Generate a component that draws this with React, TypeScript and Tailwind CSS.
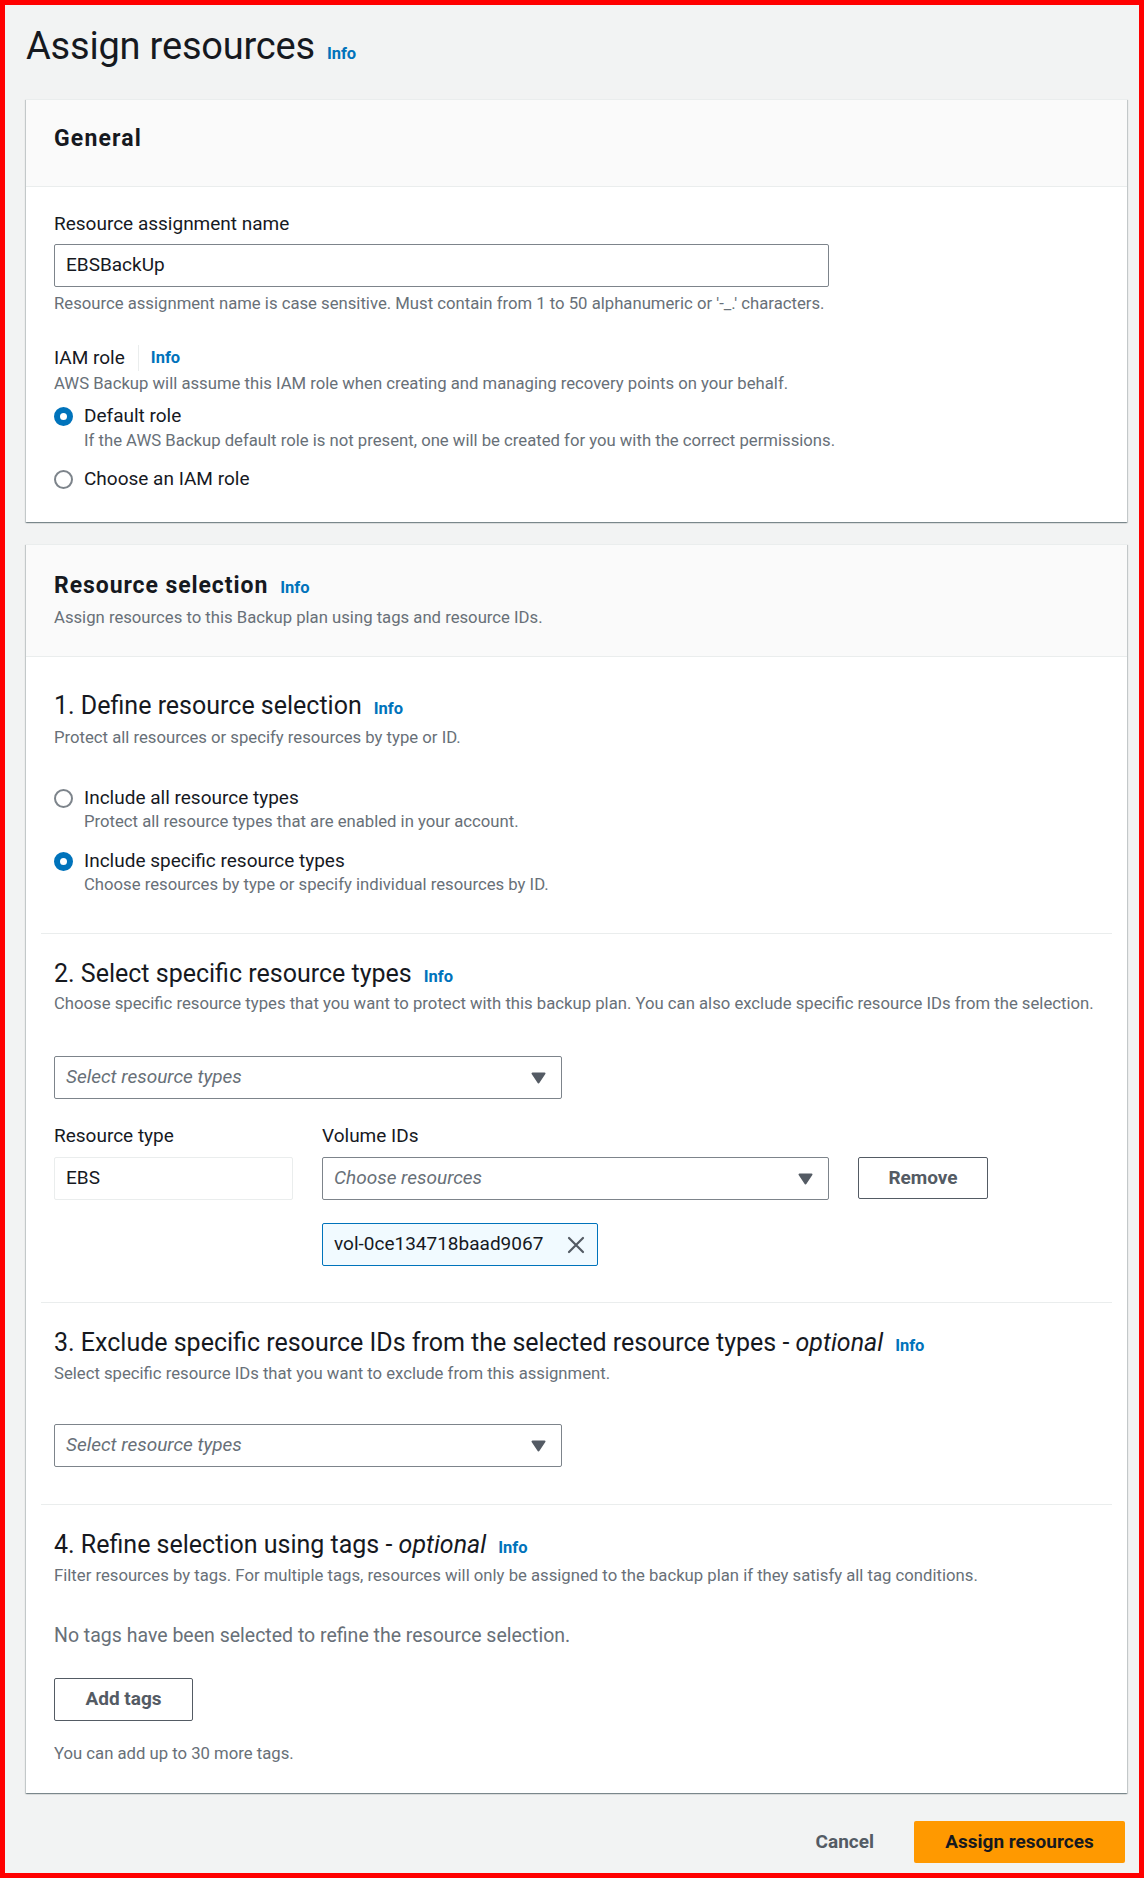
import React from "react";

const Info = () => (
  <span className="text-[16.5px] font-bold text-[#0073bb] ml-[12px]">Info</span>
);

const Caret = () => (
  <svg width="15" height="12" viewBox="0 0 15 12" className="shrink-0">
    <path d="M1.5 1.5 L13.5 1.5 L7.5 10.5 Z" fill="#545b64" stroke="#545b64" strokeWidth="2" strokeLinejoin="round" />
  </svg>
);

const XIcon = () => (
  <svg width="18" height="18" viewBox="0 0 18 18" className="shrink-0">
    <path d="M2 2 L16 16 M16 2 L2 16" stroke="#545b64" strokeWidth="2.2" strokeLinecap="round" fill="none" />
  </svg>
);

const Radio = ({ checked }: { checked: boolean }) =>
  checked ? (
    <span className="w-[19px] h-[19px] rounded-full border-[6px] border-[#0073bb] bg-white shrink-0 box-border" />
  ) : (
    <span className="w-[19px] h-[19px] rounded-full border-[2px] border-[#7d848b] bg-white shrink-0 box-border" />
  );

const RadioRow = ({ checked, label }: { checked: boolean; label: string }) => (
  <div className="flex items-center h-[24px]">
    <div className="w-[30px] flex items-center">
      <Radio checked={checked} />
    </div>
    <span className="text-[19px] leading-[24px]">{label}</span>
  </div>
);

const Select = ({ placeholder, width }: { placeholder: string; width: string }) => (
  <div
    className={`${width} h-[43px] border border-[#7d848b] rounded-[2px] bg-white flex items-center justify-between pl-[11px] pr-[15px]`}
  >
    <span className="text-[19px] italic text-[#687078]">{placeholder}</span>
    <Caret />
  </div>
);

const Help = ({ children, className = "" }: { children: React.ReactNode; className?: string }) => (
  <div className={`text-[16.7px] leading-[20px] text-[#687078] ${className}`}>{children}</div>
);

const H3 = ({ children }: { children: React.ReactNode }) => (
  <div className="flex items-baseline h-[30px]">
    <h3 className="text-[25px] leading-[30px] font-normal">{children}</h3>
    <Info />
  </div>
);

const cardShadow =
  "bg-white border-t border-[#eaeded] shadow-[0_1px_1px_0_rgba(0,28,36,0.3),1px_1px_1px_0_rgba(0,28,36,0.15),-1px_1px_1px_0_rgba(0,28,36,0.15)]";

export default function App() {
  return (
    <div className="w-[1144px] h-[1878px] border-[5px] border-[#ff0000] bg-[#f2f3f3] pl-[21px] pr-[12px] font-[Roboto,sans-serif] text-[#16191f] overflow-hidden">
      {/* Title */}
      <div className="pt-[18px] flex items-baseline h-[64px]">
        <h1 className="text-[38px] leading-[46px] font-normal tracking-[-0.2px]">Assign resources</h1>
        <Info />
      </div>

      {/* General card */}
      <div className={`mt-[30px] ${cardShadow}`}>
        <div className="bg-[#fafafa] border-b border-[#eaeded] pl-[28px] pt-[25px] pb-[33px]">
          <h2 className="text-[23px] leading-[28px] font-bold tracking-[0.05em]">General</h2>
        </div>
        <div className="px-[28px] pt-[25px] pb-[31px]">
          <div className="text-[19px] leading-[24px]">Resource assignment name</div>
          <div className="mt-[8px] w-[775px] h-[43px] border border-[#7d848b] rounded-[2px] flex items-center px-[11px] text-[19px]">
            EBSBackUp
          </div>
          <Help className="mt-[7px]">
            Resource assignment name is case sensitive. Must contain from 1 to 50 alphanumeric or '-_.' characters.
          </Help>
          <div className="mt-[32px] flex items-center h-[24px]">
            <span className="text-[19px] leading-[24px]">IAM role</span>
            <span className="ml-[13px] h-[26px] border-l border-[#eaeded]" />
            <span className="text-[16.5px] font-bold text-[#0073bb] ml-[12px]">Info</span>
          </div>
          <Help className="mt-[4px]">
            AWS Backup will assume this IAM role when creating and managing recovery points on your behalf.
          </Help>
          <div className="mt-[10px]">
            <RadioRow checked label="Default role" />
            <Help className="mt-[3px] pl-[30px]">
              If the AWS Backup default role is not present, one will be created for you with the correct permissions.
            </Help>
          </div>
          <div className="mt-[16px]">
            <RadioRow checked={false} label="Choose an IAM role" />
          </div>
        </div>
      </div>

      {/* Resource selection card */}
      <div className={`mt-[22px] ${cardShadow}`}>
        <div className="bg-[#fafafa] border-b border-[#eaeded] pl-[28px] pt-[27px] pb-[28px]">
          <div className="flex items-baseline h-[28px]">
            <h2 className="text-[23px] leading-[28px] font-bold tracking-[0.04em]">Resource selection</h2>
            <Info />
          </div>
          <Help className="mt-[8px]">Assign resources to this Backup plan using tags and resource IDs.</Help>
        </div>

        <div className="mx-[15px]">
          {/* Section 1 */}
          <div className="px-[13px] pt-[34px] pb-[38px] border-b border-[#eaeded]">
            <H3>1. Define resource selection</H3>
            <Help className="mt-[7px]">Protect all resources or specify resources by type or ID.</Help>
            <div className="mt-[38px]">
              <RadioRow checked={false} label="Include all resource types" />
              <Help className="mt-[2px] pl-[30px]">Protect all resource types that are enabled in your account.</Help>
            </div>
            <div className="mt-[17px]">
              <RadioRow checked label="Include specific resource types" />
              <Help className="mt-[2px] pl-[30px]">Choose resources by type or specify individual resources by ID.</Help>
            </div>
          </div>

          {/* Section 2 */}
          <div className="px-[13px] pt-[25px] pb-[36px] border-b border-[#eaeded]">
            <H3>2. Select specific resource types</H3>
            <Help className="mt-[5px]">
              Choose specific resource types that you want to protect with this backup plan. You can also exclude specific resource IDs from the selection.
            </Help>
            <div className="mt-[42px]">
              <Select placeholder="Select resource types" width="w-[508px]" />
            </div>
            <div className="mt-[25px] grid grid-cols-[239px_507px_130px] gap-x-[29px]">
              <div className="text-[19px] leading-[24px]">Resource type</div>
              <div className="text-[19px] leading-[24px]">Volume IDs</div>
              <div />
            </div>
            <div className="mt-[9px] grid grid-cols-[239px_507px_130px] gap-x-[29px]">
              <div className="h-[43px] border border-[#eaeded] rounded-[2px] bg-white flex items-center px-[11px] text-[19px]">
                EBS
              </div>
              <Select placeholder="Choose resources" width="w-[507px]" />
              <button className="h-[42px] border border-[#545b64] rounded-[2px] bg-white text-[19px] font-bold text-[#545b64]">
                Remove
              </button>
            </div>
            <div className="mt-[23px] ml-[268px] w-[276px] h-[43px] border border-[#0073bb] rounded-[2px] bg-[#f1faff] flex items-center justify-between pl-[11px] pr-[12px]">
              <span className="text-[19px]">vol-0ce134718baad9067</span>
              <XIcon />
            </div>
          </div>

          {/* Section 3 */}
          <div className="px-[13px] pt-[25px] pb-[37px] border-b border-[#eaeded]">
            <H3>
              3. Exclude specific resource IDs from the selected resource types - <i>optional</i>
            </H3>
            <Help className="mt-[6px]">Select specific resource IDs that you want to exclude from this assignment.</Help>
            <div className="mt-[40px]">
              <Select placeholder="Select resource types" width="w-[508px]" />
            </div>
          </div>

          {/* Section 4 */}
          <div className="px-[13px] pt-[25px] pb-[29px]">
            <H3>
              4. Refine selection using tags - <i>optional</i>
            </H3>
            <Help className="mt-[6px]">
              Filter resources by tags. For multiple tags, resources will only be assigned to the backup plan if they satisfy all tag conditions.
            </Help>
            <div className="mt-[38px] text-[19.5px] leading-[24px] text-[#687078]">
              No tags have been selected to refine the resource selection.
            </div>
            <button className="mt-[30px] w-[139px] h-[43px] border border-[#545b64] rounded-[2px] bg-white text-[19px] font-bold text-[#545b64]">
              Add tags
            </button>
            <Help className="mt-[23px]">You can add up to 30 more tags.</Help>
          </div>
        </div>
      </div>

      {/* Footer */}
      <div className="mt-[28px] flex justify-end items-center gap-[20px] pr-[2px]">
        <button className="h-[42px] px-[20px] text-[19px] font-bold text-[#545b64]">Cancel</button>
        <button className="h-[42px] w-[211px] rounded-[2px] bg-[#ff9900] text-[19px] font-bold text-[#16191f]">
          Assign resources
        </button>
      </div>
    </div>
  );
}
